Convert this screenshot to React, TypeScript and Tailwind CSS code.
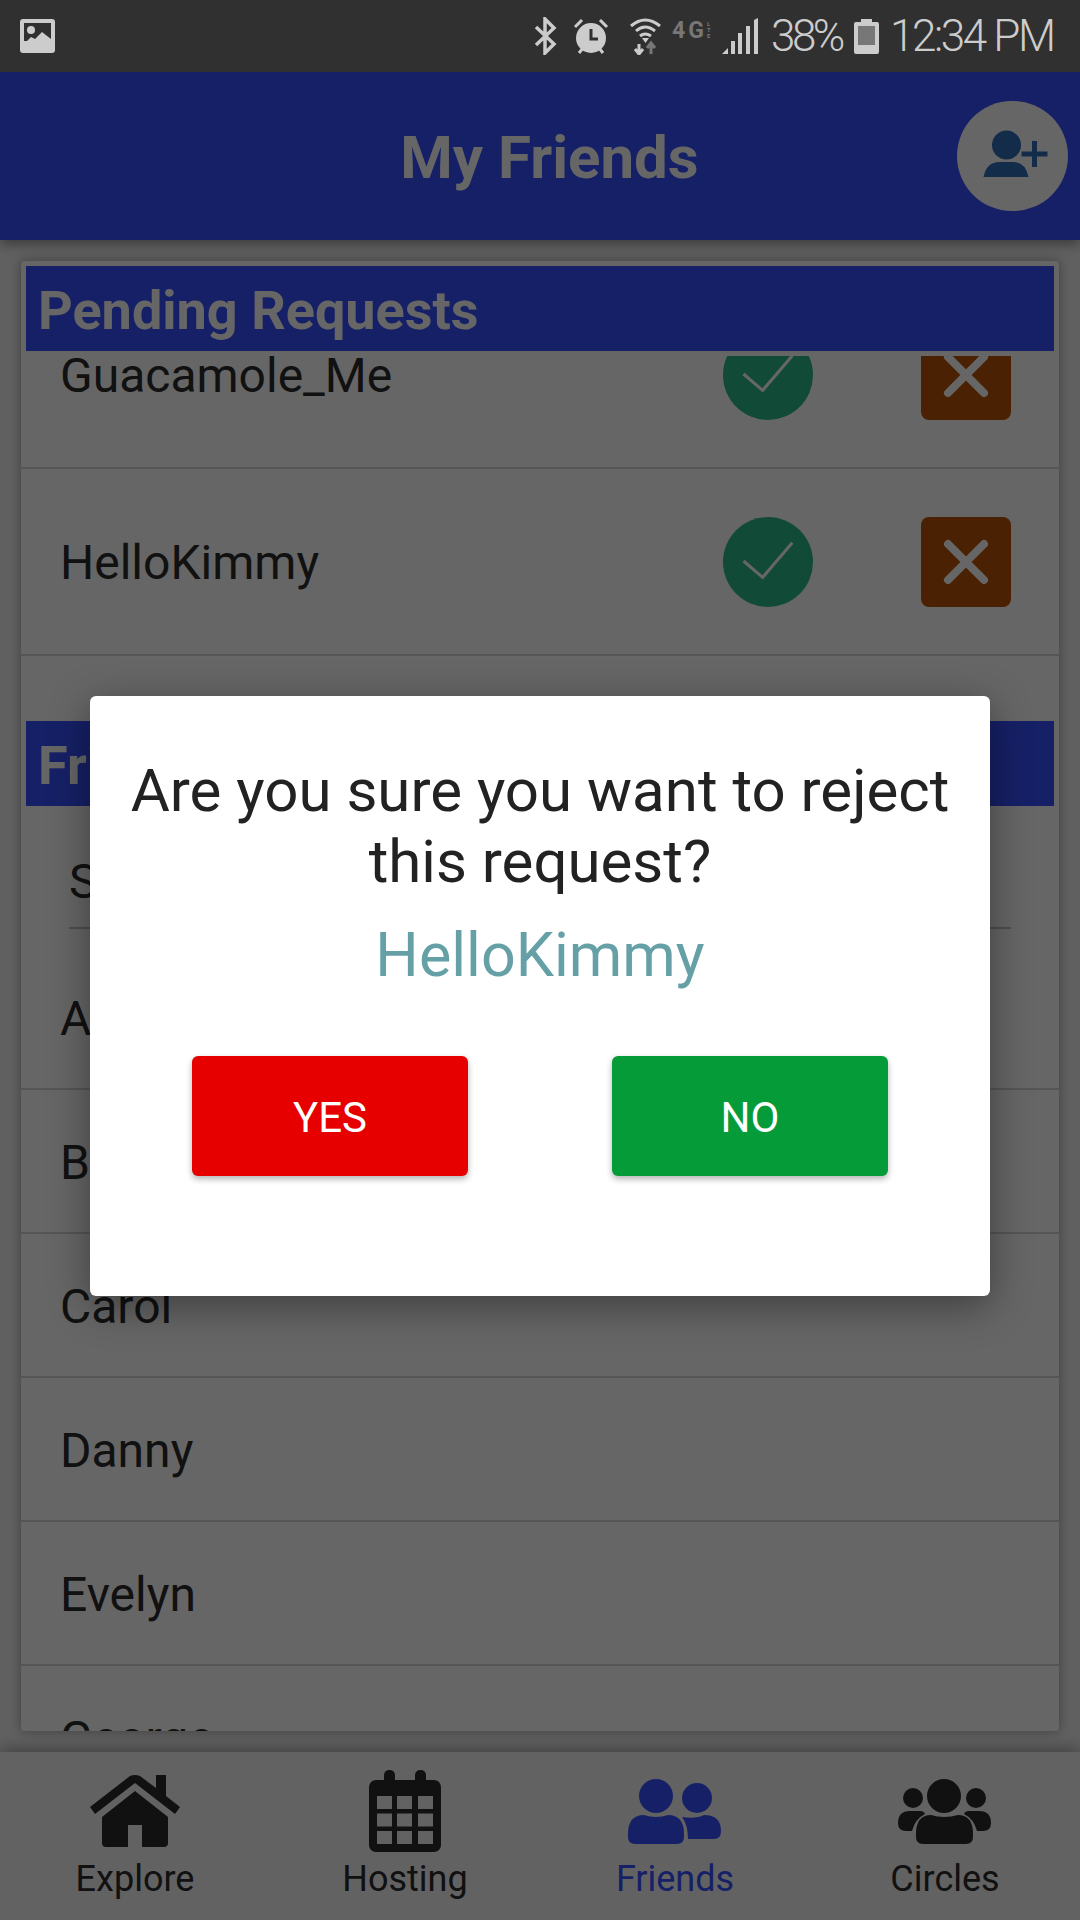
const PENDING = ['Guacamole_Me', 'HelloKimmy'];
const FRIENDS = ['Alice', 'Bob', 'Carol', 'Danny', 'Evelyn', 'George'];

function CheckButton() {
  return (
    <button className="w-[90px] h-[90px] rounded-full bg-[#2db98c]">
      <svg viewBox="0 0 90 90" className="w-full h-full">
        <path d="M20.5 44 L39.7 60.3 L69.3 25.7" fill="none" stroke="#fff" strokeWidth="3" />
      </svg>
    </button>
  );
}

function RejectButton() {
  return (
    <button className="w-[90px] h-[90px] rounded-lg bg-[#b95508]">
      <svg viewBox="0 0 90 90" className="w-full h-full">
        <path d="M27 27 L63 63 M63 27 L27 63" fill="none" stroke="#fff" strokeWidth="8" strokeLinecap="round" />
      </svg>
    </button>
  );
}

function HomeIcon() {
  return (
    <svg viewBox="0 0 90 72" className="w-[90px] h-[72px]" fill="#2b2b2b">
      <path d="M0 32 L40 1 Q45 -1 50 1 L66 13 L66 0 L76 0 L76 21 L90 32 L85 39 L45 8 L5 39 Z" />
      <path d="M45 16 L78 42 L78 68 Q78 72 74 72 L52 72 L52 50 L38 50 L38 72 L16 72 Q12 72 12 68 L12 42 Z" />
    </svg>
  );
}

function CalendarIcon() {
  const cols = [8, 28, 49];
  const rows = [26, 43.5, 61];
  return (
    <svg viewBox="0 0 72 82" className="w-[72px] h-[82px]" fill="#2b2b2b">
      <rect x="0" y="10" width="72" height="72" rx="7" />
      <rect x="15" y="0" width="11" height="20" rx="5" />
      <rect x="46" y="0" width="11" height="20" rx="5" />
      {rows.map(y => cols.map(x => <rect key={`${x}-${y}`} x={x} y={y} width="15" height="13" fill="#f5f5f5" />))}
    </svg>
  );
}

function FriendsIcon() {
  return (
    <svg viewBox="0 0 93 65" className="w-[93px] h-[65px] -translate-x-[1px]" fill="#3952ff">
      <circle cx="28" cy="17" r="17" />
      <circle cx="69" cy="19" r="15" />
      <path d="M0 55 Q0 36 16 36 Q28 40 40 36 Q56 36 56 55 V58 Q56 65 49 65 H7 Q0 65 0 58 Z" />
      <path d="M54 38 Q68 40 76 36 Q93 36 93 52 Q93 60 86 60 H60 Q60 46 54 38 Z" />
    </svg>
  );
}

function CirclesIcon() {
  return (
    <svg viewBox="0 0 93 65" className="w-[93px] h-[65px] -translate-x-[1px]" fill="#2b2b2b">
      <circle cx="46" cy="17" r="17" />
      <circle cx="15" cy="19" r="10" />
      <circle cx="78" cy="19" r="10" />
      <path d="M18 55 Q18 36 33 36 Q46 40 60 36 Q75 36 75 55 V58 Q75 65 68 65 H25 Q18 65 18 58 Z" />
      <path d="M0 44 Q0 32 12 32 H22 Q26 32 27 35 Q17 40 14 52 H8 Q0 52 0 44 Z" />
      <path d="M93 44 Q93 32 81 32 H71 Q67 32 66 35 Q76 40 79 52 H85 Q93 52 93 44 Z" />
    </svg>
  );
}

function StatusBar() {
  return (
    <div className="relative z-20 h-[72px] flex-none flex items-center bg-[#303030] text-[#cccccc]">
      <svg viewBox="0 0 35 34" className="ml-[20px] w-[35px] h-[34px]">
        <rect width="35" height="34" rx="3" fill="#cccccc" />
        <rect x="4" y="4" width="27" height="18" fill="#303030" />
        <circle cx="11" cy="11" r="4" fill="#cccccc" />
        <path d="M4 25 L11 18 L15 20 L22 13 L31 20 V26 H4 Z" fill="#cccccc" />
      </svg>
      <svg viewBox="0 0 23 38" className="ml-[479px] w-[23px] h-[38px]">
        <path d="M2 10 L20 27 L11 36 V2 L20 11 L2 28" fill="none" stroke="#cccccc" strokeWidth="3.5" />
      </svg>
      <svg viewBox="0 0 36 35" className="ml-[16px] w-[36px] h-[35px]">
        <circle cx="18" cy="19" r="15" fill="#cccccc" />
        <path d="M18 10 V20 H25" fill="none" stroke="#303030" strokeWidth="3" />
        <path d="M2 8 L9 1 M34 8 L27 1 M6 34 L10 29 M30 34 L26 29" stroke="#cccccc" strokeWidth="3" />
      </svg>
      <svg viewBox="0 0 33 38" className="ml-[20px] w-[33px] h-[38px]">
        <path d="M2 9 Q16 -3 31 9 M7 14 Q16 6 26 14 M11 19 Q16 15 22 19" fill="none" stroke="#cccccc" strokeWidth="3" />
        <path d="M13 21 H20 L16.5 26 Z" fill="#cccccc" />
        <path d="M10 27 V36 M6 32 L10 37 L14 32" fill="none" stroke="#cccccc" strokeWidth="3" />
        <path d="M22 37 V28 M18 31 L22 26 L26 31" fill="none" stroke="#777777" strokeWidth="3" />
      </svg>
      <div className="ml-[10px] w-[41px] -translate-y-[6px] flex items-center font-['Roboto',sans-serif] font-bold text-[#777777]">
        <span className="text-[23px] leading-none tracking-[3px]">4G</span>
        <span className="flex flex-col text-[6px] leading-[6px]">
          <span>L</span>
          <span>T</span>
          <span>E</span>
        </span>
      </div>
      <svg viewBox="0 0 36 36" className="ml-[9px] w-[36px] h-[36px]" fill="#cccccc">
        <path d="M0 36 L6 30 V36 Z" />
        <rect x="9" y="23" width="4" height="13" />
        <rect x="16" y="15" width="4" height="21" />
        <rect x="24" y="8" width="4" height="28" />
        <path d="M32 2 L36 0 V36 H32 Z" />
      </svg>
      <span className="ml-[13px] w-[70px] whitespace-nowrap font-['Roboto',sans-serif] text-[44px] leading-none font-[350] tracking-[-3.5px]">38%</span>
      <svg viewBox="0 0 25 35" className="ml-[13px] w-[25px] h-[35px]">
        <path d="M7 0 H18 V3 H23 Q25 3 25 5 V33 Q25 35 23 35 H2 Q0 35 0 33 V5 Q0 3 2 3 H7 Z" fill="#cccccc" />
        <rect x="4" y="7" width="17" height="19" fill="#777777" />
      </svg>
      <span className="ml-[11px] whitespace-nowrap font-['Roboto',sans-serif] text-[44px] leading-none font-[350] tracking-[-2.4px]">12:34 PM</span>
    </div>
  );
}

function TabBar() {
  const tabs = [
    { label: 'Explore', icon: <HomeIcon />, active: false },
    { label: 'Hosting', icon: <CalendarIcon />, active: false },
    { label: 'Friends', icon: <FriendsIcon />, active: true },
    { label: 'Circles', icon: <CirclesIcon />, active: false },
  ];
  return (
    <div className="relative h-[168px] flex-none grid grid-cols-4 bg-[#f5f5f5] shadow-[0_-4px_14px_rgba(0,0,0,0.3)]">
      {tabs.map(tab => (
        <div key={tab.label} className="flex flex-col items-center">
          <div className="h-[100px] mt-[9px] flex items-center justify-center">{tab.icon}</div>
          <span className={tab.active ? '-mt-[2px] text-[36px] leading-[40px] text-[#3952ff]' : '-mt-[2px] text-[36px] leading-[40px] text-[#2b2b2b]'}>{tab.label}</span>
        </div>
      ))}
    </div>
  );
}

export default function App() {
  return (
    <div className="relative w-[1080px] h-[1920px] overflow-hidden flex flex-col bg-[#f0f0f0] font-['Roboto',sans-serif]">
      <StatusBar />

      <header className="relative z-10 h-[168px] flex-none flex items-center pr-[12px] bg-[#3952ff] shadow-[0_4px_12px_rgba(0,0,0,0.4)]">
        <div className="w-[142px]" />
        <h1 className="flex-1 pt-[4px] text-center text-[60px] leading-none font-bold text-white">My Friends</h1>
        <button className="w-[111px] h-[110px] rounded-full bg-white">
          <svg viewBox="0 0 110 110" className="w-full h-full" fill="#306eb9">
            <circle cx="49" cy="44" r="14.5" />
            <path d="M26 76 Q29 61 42 61 H56 Q68 61 71 76 Z" />
            <path d="M64 50.5 H90 V55.5 H64 Z M74.5 40 H79.5 V66 H74.5 Z" />
          </svg>
        </button>
      </header>

      <main className="flex-1 min-h-0 px-[21px] pt-[21px] pb-[21px]">
        <div className="h-full overflow-hidden rounded-sm bg-white shadow-[0_0_12px_rgba(0,0,0,0.35)] pt-[5px]">
          <h2 className="h-[85px] mx-[5px] px-[12px] pt-[4px] flex items-center bg-[#3952ff] text-[54px] font-bold text-white">Pending Requests</h2>

          <div className="h-[365px] mt-[5px] overflow-hidden">
            <div className="-mt-[74px]">
              {PENDING.map(name => (
                <div key={name} className="h-[187px] flex items-center pl-[39px] pr-[48px] border-b-2 border-[#d5d5d5]">
                  <span className="flex-1 pt-[3px] text-[48px] text-[#2b2b2b]">{name}</span>
                  <CheckButton />
                  <div className="w-[108px]" />
                  <RejectButton />
                </div>
              ))}
            </div>
          </div>

          <h2 className="h-[85px] mx-[5px] px-[12px] pt-[4px] flex items-center bg-[#3952ff] text-[54px] font-bold text-white">Friends</h2>

          <div className="mx-[48px] h-[123px] flex items-center pt-[30px] border-b-2 border-[#c4c4c4] text-[48px] text-[#2b2b2b]">Search</div>

          <div className="mt-[17px]">
            {FRIENDS.map(name => (
              <div key={name} className="h-[144px] flex items-center pl-[39px] pt-[3px] border-b-2 border-[#d5d5d5] text-[48px] text-[#2b2b2b]">{name}</div>
            ))}
          </div>
        </div>
      </main>

      <TabBar />

      {/* dimmed backdrop and confirm dialog */}
      <div className="absolute inset-x-0 top-[72px] bottom-0 z-10 flex items-center justify-center bg-black/60">
        <div className="w-[900px] h-[600px] flex flex-col items-center rounded-md bg-white pt-[59px] shadow-[0_10px_40px_rgba(0,0,0,0.4)]">
          <p className="w-[840px] text-center text-[60px] leading-[71px] text-[#222222]">Are you sure you want to reject this request?</p>
          <p className="mt-[18px] text-[61px] leading-[80px] text-[#64a0a6]">HelloKimmy</p>
          <div className="mt-[61px] flex gap-[144px]">
            <button className="w-[276px] h-[120px] rounded-md pt-[3px] bg-[#e60000] text-[42px] text-white shadow-[0_3px_6px_rgba(0,0,0,0.3)]">YES</button>
            <button className="w-[276px] h-[120px] rounded-md pt-[3px] bg-[#059b38] text-[42px] text-white shadow-[0_3px_6px_rgba(0,0,0,0.3)]">NO</button>
          </div>
        </div>
      </div>
    </div>
  );
}
